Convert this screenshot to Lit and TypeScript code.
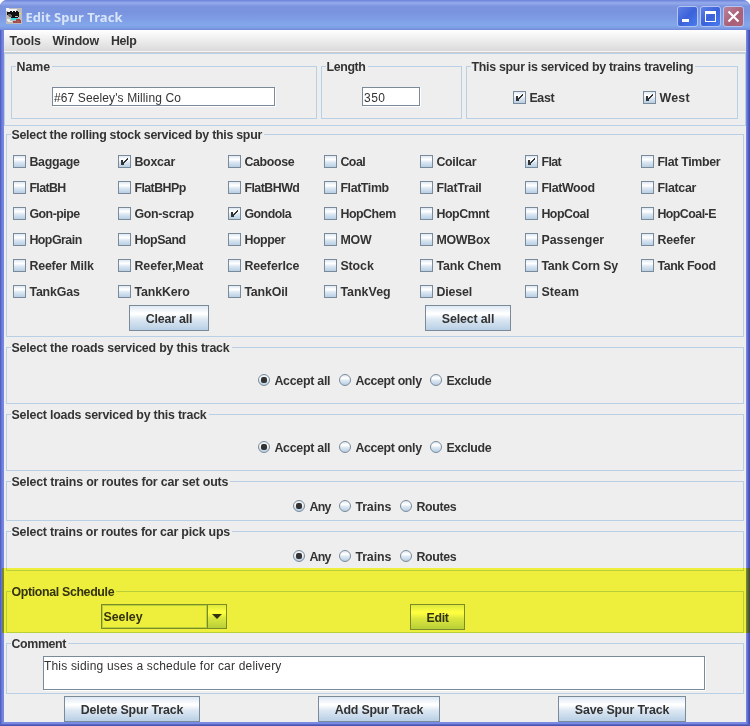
import { LitElement, html, css, svg, nothing } from "lit";
import { customElement, property } from "lit/decorators.js";
import { classMap } from "lit/directives/class-map.js";

const METAL = css`linear-gradient(180deg, #dde8f3 0%, #ffffff 30%, #ffffff 34%, #dde8f3 55%, #b8cfe5 100%)`;

/** A run of text whose tracking is set so that it takes up a given width. */
@customElement("fit-text")
class FitText extends LitElement {
  @property() text = "";
  @property({ type: Number }) w = 0;
  static styles = css`
    :host { display: inline-block; white-space: nowrap; letter-spacing: 0; text-align: left; vertical-align: top; }
  `;
  render() {
    return html`<span>${this.text}</span>`;
  }
  updated() {
    const run = this.renderRoot.querySelector("span")!;
    run.style.letterSpacing = "0px";
    if (this.w) {
      const natural = run.getBoundingClientRect().width;
      run.style.letterSpacing = `${(this.w - natural) / this.text.length}px`;
    }
  }
}

@customElement("check-item")
class CheckItem extends LitElement {
  @property() label = "";
  @property({ type: Number }) w = 0;
  @property({ type: Boolean }) checked = false;
  static styles = css`
    :host { display: flex; align-items: flex-start; gap: 3.4px; height: 13px; line-height: 15px; white-space: nowrap; }
    .box { box-sizing: border-box; flex: none; width: 13px; height: 13px; border: 1px solid #7a8a99; background: ${METAL}; }
    svg { display: block; }
  `;
  render() {
    return html`<span class="box">${this.checked
      ? html`<svg width="11" height="11" shape-rendering="crispEdges"><path fill="#333" d="M2 4h2v5h-2zM4 6h1v3h-1zM5 5h1v2h-1zM6 4h1v2h-1zM7 3h1v2h-1zM8 2h1v2h-1z"/></svg>`
      : nothing}</span><fit-text .text=${this.label} .w=${this.w - 0.7}></fit-text>`;
  }
}

@customElement("radio-item")
class RadioItem extends LitElement {
  @property() label = "";
  @property({ type: Number }) w = 0;
  @property({ type: Boolean }) checked = false;
  static styles = css`
    :host { display: flex; align-items: flex-start; gap: 4.4px; height: 12px; line-height: 14px; white-space: nowrap; }
    .dot { box-sizing: border-box; flex: none; width: 12px; height: 12px; border: 1px solid #7a8a99; border-radius: 50%; background: ${METAL}; display: grid; place-items: center; }
    .on::after { content: ""; width: 6px; height: 6px; border-radius: 2px; background: #333; }
  `;
  render() {
    return html`<span class=${classMap({ dot: true, on: this.checked })}></span><fit-text .text=${this.label} .w=${this.w - 0.7}></fit-text>`;
  }
}

@customElement("group-box")
class GroupBox extends LitElement {
  @property() label = "";
  @property({ type: Number }) w = 0;
  static styles = css`
    :host { display: block; box-sizing: border-box; position: relative; border: 1px solid #b8cfe5; }
    .title { position: absolute; left: 4px; top: -7px; height: 15px; line-height: 15px; padding: 0 2px 0 0.5px; background: #eee; white-space: nowrap; }
  `;
  render() {
    return html`<span class="title"><fit-text .text=${this.label} .w=${this.w - 1}></fit-text></span><slot></slot>`;
  }
}

type Label = [text: string, width: number];

const STOCK: Label[] = [
  ["Baggage", 51], ["Boxcar", 41.3], ["Caboose", 50.5], ["Coal", 25.5], ["Coilcar", 40.5], ["Flat", 20.5], ["Flat Timber", 63.5],
  ["FlatBH", 37], ["FlatBHPp", 52], ["FlatBHWd", 55.7], ["FlatTimb", 49], ["FlatTrail", 45.8], ["FlatWood", 54], ["Flatcar", 39.5],
  ["Gon-pipe", 51], ["Gon-scrap", 60], ["Gondola", 47.5], ["HopChem", 56], ["HopCmnt", 53.5], ["HopCoal", 48.3], ["HopCoal-E", 59.2],
  ["HopGrain", 53], ["HopSand", 52], ["Hopper", 41.5], ["MOW", 32], ["MOWBox", 54.3], ["Passenger", 63.5], ["Reefer", 38.5],
  ["Reefer Milk", 65], ["Reefer,Meat", 69.7], ["ReeferIce", 55.7], ["Stock", 34], ["Tank Chem", 65.5], ["Tank Corn Sy", 77.2], ["Tank Food", 59],
  ["TankGas", 51], ["TankKero", 56], ["TankOil", 44], ["TankVeg", 51], ["Diesel", 36.5], ["Steam", 38.5],
];
const SERVICED = new Set(["Boxcar", "Flat", "Gondola"]);
const ACCEPT: Label[] = [["Accept all", 56.6], ["Accept only", 67], ["Exclude", 45.5]];
const ROUTES: Label[] = [["Any", 22], ["Trains", 36.5], ["Routes", 40.5]];

const locomotive = svg`
  <rect width="16" height="16" fill="#bdbdbd"/>
  <path fill="#f4f4f4" d="M0 0h3v1h8v1h-1v1h2v1h-10v-1h-2z"/>
  <path fill="#111" d="M1 4h3v-1h2v1h1v-1h2v1h1v-1h2v1h1v5h-1v1h-7v-1h-2v-2h-2z"/>
  <path fill="#666" d="M2 6h3v1h1v2h-3v-1h-1z"/>
  <path fill="#bdbdbd" d="M9 8h3v1h-3z"/>
  <path fill="#34dfe0" d="M5 10h7v1h-1v1h-6z"/>
  <path fill="#a84848" d="M10 11h4v1h1v3h-8v-2h3z"/>
  <path fill="#8a6a6a" d="M11 13h2v1h-2z"/>
  <path fill="#e4e13a" d="M13 5h2v1h-2z"/>
  <path fill="#eee" d="M1 11h3v2h2v1h-4v-1h-1z"/>`;

@customElement("app-root")
class AppRoot extends LitElement {
  static styles = css`
    :host { display: block; width: 750px; height: 726px; overflow: hidden; background: #fff; position: relative;
      font: bold 12.4px/13px "Liberation Sans", Arial, sans-serif; color: #333; }
    .window { box-sizing: border-box; height: 726px; display: flex; flex-direction: column; padding: 0 4px 4px; border-radius: 7px 7px 0 0;
      background: linear-gradient(90deg, #4a56b6 0, #5b6ad0 1px, #6f80dc 2px, #7a8ae2 4px, #7a8ae2 746px, #6f80dc 747px, #5662c8 748px, #4248ac 750px); box-shadow: inset 0 -1px #4b55b0, inset 0 -2px #5a66c6; }
    .titlebar { flex: none; box-sizing: border-box; height: 30px; margin: 0 -4px; padding: 6px 6px 0 6px; display: flex; align-items: flex-start; border-radius: 7px 7px 0 0;
      background: linear-gradient(180deg, #6b80d6 0, #8aa0e8 2px, #95abec 3px, #7d95df 6px, #7a93df 12px, #7f9ee6 20px, #83a8ea 25px, #7d9ce4 28px, #7288d8 30px); }
    .appicon { margin-top: 2px; flex: none; }
    .caption { margin-left: 3.5px; flex: 1; font: bold 13px/23px "Noto Sans", sans-serif; color: #d8e4f8; }
    .wins { display: flex; gap: 2px; }
    .win { box-sizing: border-box; width: 21px; height: 21px; border: 1px solid #b4c4f2; border-radius: 3px; background: linear-gradient(135deg, #5f80e4, #3b62da 50%, #4a7cf0); }
    .win.close { background: linear-gradient(135deg, #b98299, #a95f77 60%, #b0667a); }
    .win svg { display: block; }
    .menu { flex: none; box-sizing: border-box; height: 22px; padding: 0 5.6px; display: flex; gap: 12px; line-height: 22px; background: linear-gradient(180deg, #fff, #dadada); border-bottom: 1px solid #f4f4f4; }
    .client { flex: 1; background: #eee; display: flex; flex-direction: column; border-top: 1px solid #ccc; }
    .top { flex: none; box-sizing: border-box; height: 73px; border: 1px solid #b8cfe5; padding: 12px 7px 6px 6px; display: grid; grid-template-columns: 306px 141px 272px; gap: 4px; }
    .field { box-sizing: border-box; height: 19px; margin-top: 20px; border: 1px solid #7a8a99; box-shadow: 1px 1px #fff; background: #fff; font-size: 12px; font-weight: normal; line-height: 20px; padding-left: 1px; white-space: nowrap; }
    .name { margin-left: 40px; width: 223px; }
    .length { margin-left: 40px; width: 58px; }
    .ways { display: flex; padding: 24px 0 0 46px; }
    .ways check-item { flex: none; width: 130px; }
    .ways check-item:last-child { width: 60px; }
    .group { flex: none; margin: 0 2px; }
    .stock { margin-top: 8px; height: 203px; }
    .grid { display: grid; grid-template-columns: 105px 110px 96px 96px 105px 116px 100px; row-gap: 13px; padding: 20px 0 0 6px; }
    .actions { display: flex; padding: 7px 0 0 122px; gap: 216px; }
    .btn { box-sizing: border-box; height: 26px; border: 1px solid #7a8a99; background: ${METAL}; text-align: center; line-height: 26px; white-space: nowrap; }
    .w80 { width: 80px; } .w86 { width: 86px; } .w55 { width: 55px; } .w136 { width: 136px; } .w122 { width: 122px; } .w128 { width: 128px; }
    .roads { margin-top: 10px; height: 57px; }
    .trains { margin-top: 10px; height: 40px; }
    .choices { display: grid; }
    .accept { grid-template-columns: 81px 91px 80px; padding: 26px 0 0 251px; }
    .routes { grid-template-columns: 46px 61px 80px; padding: 18px 0 0 286px; }
    .schedule { margin-top: 20px; height: 42px; }
    .line { display: flex; padding: 12px 0 0 94px; gap: 183px; }
    .combo { box-sizing: border-box; width: 126px; height: 25px; border: 1px solid #7a8a99; display: flex; }
    .value { flex: 1; box-sizing: border-box; border: 1px solid #b8cfe5; line-height: 22px; padding-left: 0.5px; }
    .arrow { width: 19px; box-sizing: border-box; border-left: 1px solid #7a8a99; background: ${METAL}; display: grid; place-items: center; }
    .comment { margin-top: 10px; height: 51px; }
    .area { box-sizing: border-box; margin: 12px 0 0 36px; width: 662px; height: 34px; border: 1px solid #7a8a99; box-shadow: 1px 1px #fff; background: #fff; font-size: 12px; font-weight: normal; line-height: 18px; }
    .bottom { display: flex; padding: 2px 0 0 60px; gap: 118px; }
    .highlight { position: absolute; left: 2px; right: 0; top: 568px; height: 65px; background: #ffff40; mix-blend-mode: multiply; }
  `;

  private choices(kind: string, labels: Label[]) {
    return html`<div class="choices ${kind}">${labels.map(([l, w], i) => html`<radio-item .label=${l} .w=${w} ?checked=${i === 0}></radio-item>`)}</div>`;
  }

  private button(size: string, text: string, w: number) {
    return html`<div class="btn ${size}"><fit-text .text=${text} .w=${w}></fit-text></div>`;
  }

  render() {
    return html`
      <div class="window">
        <div class="titlebar">
          <svg class="appicon" width="16" height="16" shape-rendering="crispEdges">${locomotive}</svg>
          <span class="caption"><fit-text text="Edit Spur Track" w="97"></fit-text></span>
          <div class="wins">
            <span class="win"><svg width="19" height="19"><path fill="#fff" d="M4 12h7v3h-7z"/></svg></span>
            <span class="win"><svg width="19" height="19"><path fill="#fff" fill-rule="evenodd" d="M4 4h11v11h-11zM5 7v7h9v-7z"/></svg></span>
            <span class="win close"><svg width="19" height="19"><path stroke="#fff" stroke-width="2.2" d="M4.5 4.5l10 10M14.5 4.5l-10 10"/></svg></span>
          </div>
        </div>
        <div class="menu"><fit-text text="Tools" w="31"></fit-text><fit-text text="Window" w="46.3"></fit-text><fit-text text="Help" w="25.5"></fit-text></div>
        <div class="client">
          <div class="top">
            <group-box label="Name" w="34.5"><div class="field name"><fit-text text="#67 Seeley's Milling Co" w="127"></fit-text></div></group-box>
            <group-box label="Length" w="40"><div class="field length"><fit-text text="350" w="21.5"></fit-text></div></group-box>
            <group-box label="This spur is serviced by trains traveling" w="222.7">
              <div class="ways"><check-item label="East" w="25.7" checked></check-item><check-item label="West" w="31.2" checked></check-item></div>
            </group-box>
          </div>
          <group-box class="group stock" label="Select the rolling stock serviced by this spur" w="251.5">
            <div class="grid">${STOCK.map(([s, w]) => html`<check-item .label=${s} .w=${w} ?checked=${SERVICED.has(s)}></check-item>`)}</div>
            <div class="actions">${this.button("w80", "Clear all", 46.5)}${this.button("w86", "Select all", 52.5)}</div>
          </group-box>
          <group-box class="group roads" label="Select the roads serviced by this track" w="219">${this.choices("accept", ACCEPT)}</group-box>
          <group-box class="group roads" label="Select loads serviced by this track" w="196">${this.choices("accept", ACCEPT)}</group-box>
          <group-box class="group trains" label="Select trains or routes for car set outs" w="217.7">${this.choices("routes", ROUTES)}</group-box>
          <group-box class="group trains" label="Select trains or routes for car pick ups" w="219.5">${this.choices("routes", ROUTES)}</group-box>
          <group-box class="group schedule" label="Optional Schedule" w="103.7">
            <div class="line">
              <div class="combo"><span class="value"><fit-text text="Seeley" w="39"></fit-text></span><span class="arrow"><svg width="10" height="5"><path fill="#333" d="M0 0h10l-5 5z"/></svg></span></div>
              ${this.button("w55", "Edit", 22)}
            </div>
          </group-box>
          <group-box class="group comment" label="Comment" w="55.5"><div class="area"><fit-text text="This siding uses a schedule for car delivery" w="237.5"></fit-text></div></group-box>
          <div class="bottom">${this.button("w136", "Delete Spur Track", 102.5)}${this.button("w122", "Add Spur Track", 88.5)}${this.button("w128", "Save Spur Track", 94.5)}</div>
        </div>
      </div>
      <div class="highlight"></div>
    `;
  }
}
